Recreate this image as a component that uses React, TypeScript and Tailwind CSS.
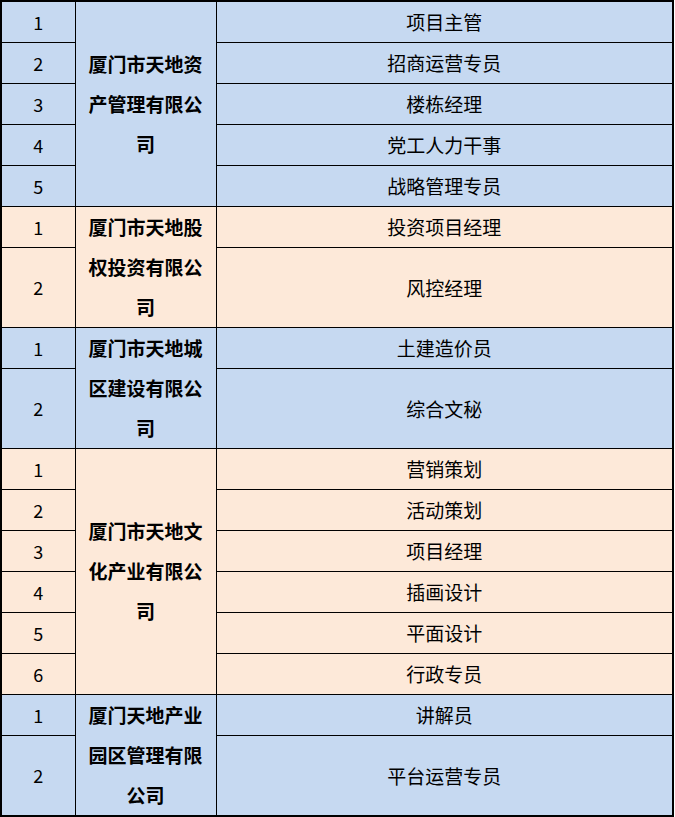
import React from 'react';

type Group = {
  company: string[];
  tone: 'blue' | 'peach';
  rows: { title: string; tall?: boolean }[];
};

const groups: Group[] = [
  {
    company: ['厦门市天地资', '产管理有限公', '司'],
    tone: 'blue',
    rows: [
      { title: '项目主管' },
      { title: '招商运营专员' },
      { title: '楼栋经理' },
      { title: '党工人力干事' },
      { title: '战略管理专员' },
    ],
  },
  {
    company: ['厦门市天地股', '权投资有限公', '司'],
    tone: 'peach',
    rows: [{ title: '投资项目经理' }, { title: '风控经理', tall: true }],
  },
  {
    company: ['厦门市天地城', '区建设有限公', '司'],
    tone: 'blue',
    rows: [{ title: '土建造价员' }, { title: '综合文秘', tall: true }],
  },
  {
    company: ['厦门市天地文', '化产业有限公', '司'],
    tone: 'peach',
    rows: [
      { title: '营销策划' },
      { title: '活动策划' },
      { title: '项目经理' },
      { title: '插画设计' },
      { title: '平面设计' },
      { title: '行政专员' },
    ],
  },
  {
    company: ['厦门天地产业', '园区管理有限', '公司'],
    tone: 'blue',
    rows: [{ title: '讲解员' }, { title: '平台运营专员', tall: true }],
  },
];

export default function App() {
  return (
    <div className="w-[675px] h-[817px] bg-white" style={{ fontFamily: '"Noto Sans CJK SC", "Noto Sans", sans-serif' }}>
      <table className="w-[674px] border-collapse border-2 border-black text-black">
        <colgroup>
          <col className="w-[74px]" />
          <col className="w-[141px]" />
          <col />
        </colgroup>
        <tbody>
          {groups.map((group, gi) => {
            const bg = group.tone === 'blue' ? 'bg-[#c6d9f1]' : 'bg-[#fde9d9]';
            return group.rows.map((row, ri) => (
              <tr key={`${gi}-${ri}`} className={row.tall ? 'h-[80px]' : 'h-[41px]'}>
                <td className={`${bg} border border-black p-0 text-center text-[18px] leading-none`}>{ri + 1}</td>
                {ri === 0 && (
                  <td rowSpan={group.rows.length} className={`${bg} border border-black p-0 text-center align-middle`}>
                    <div className="flex flex-col items-center text-[19px] font-bold leading-[40px]">
                      {group.company.map((line) => (
                        <span key={line}>{line}</span>
                      ))}
                    </div>
                  </td>
                )}
                <td className={`${bg} border border-black p-0 text-center text-[19px] leading-none`}>{row.title}</td>
              </tr>
            ));
          })}
        </tbody>
      </table>
    </div>
  );
}
